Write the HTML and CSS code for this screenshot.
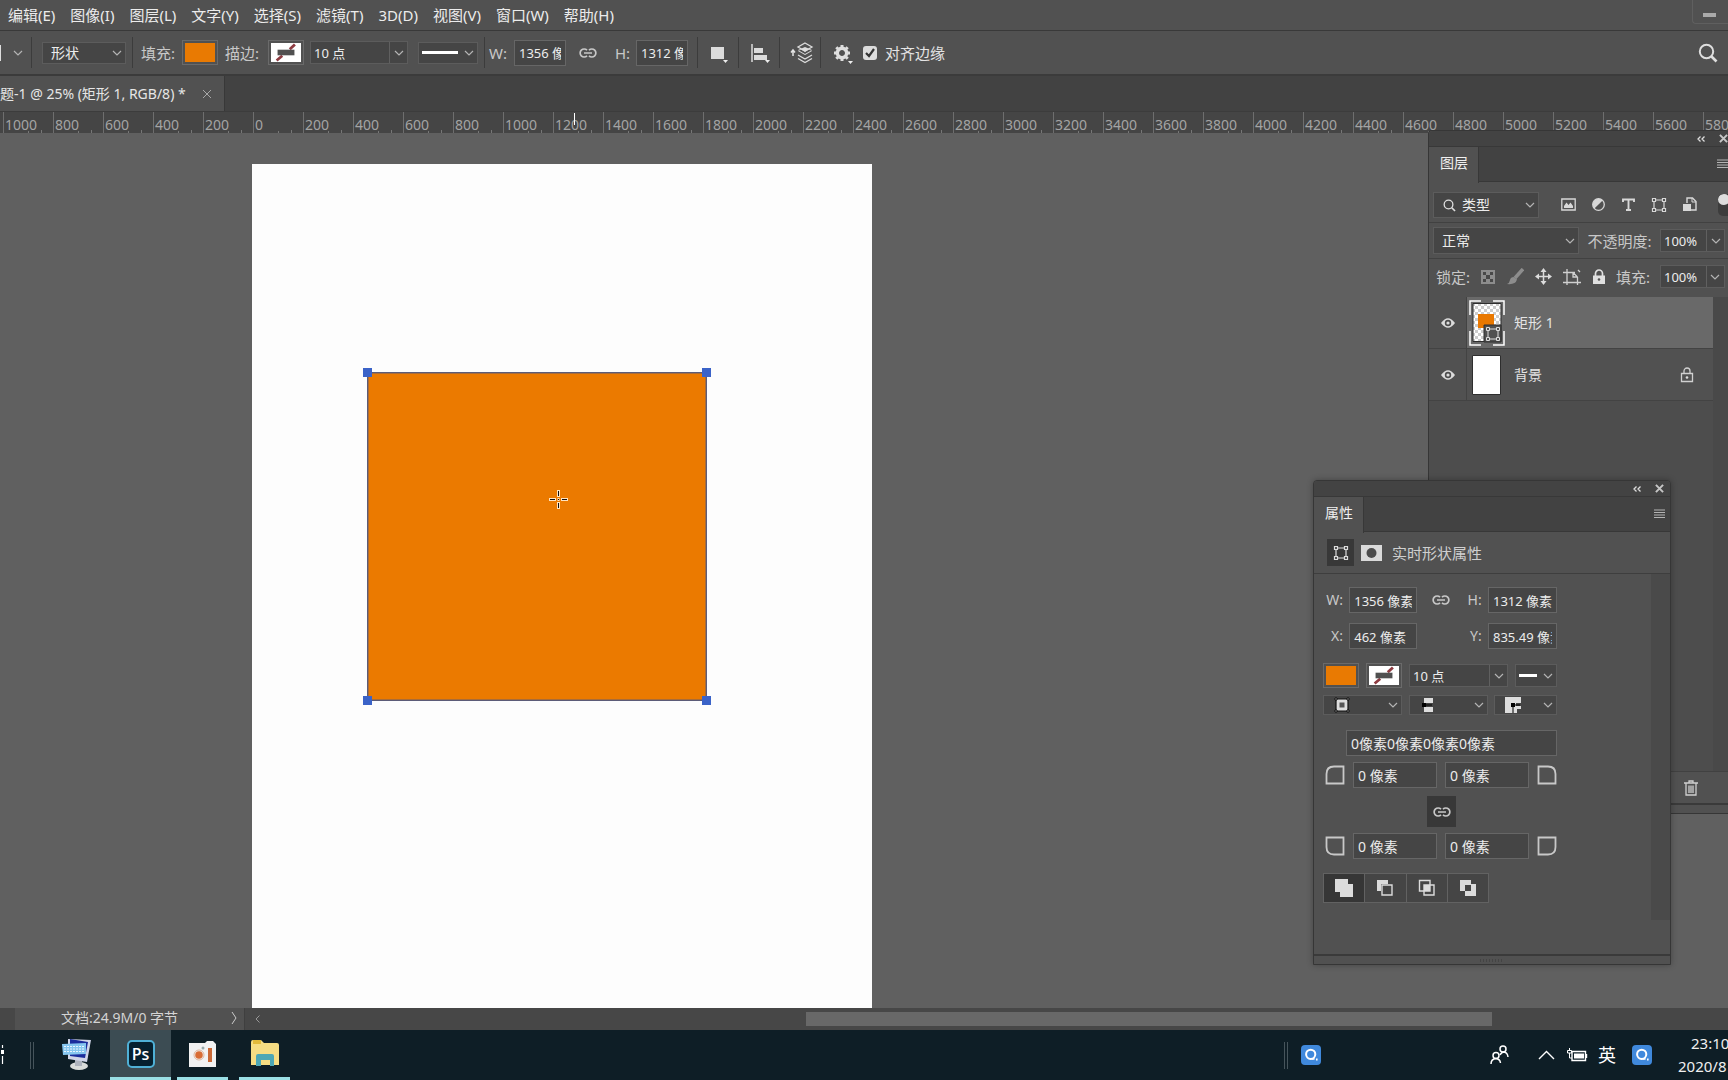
FILE: index.html
```html
<!DOCTYPE html>
<html lang="zh-CN">
<head>
<meta charset="utf-8">
<title>Photoshop</title>
<link rel="stylesheet" href="styles.css">
</head>
<body>
<svg class="defs" aria-hidden="true">
  <symbol id="chev" viewBox="0 0 10 6"><path d="M1 1l4 4 4-4" fill="none" stroke="#b4b4b4" stroke-width="1.2"/></symbol>
  <symbol id="link" viewBox="0 0 20 12"><path d="M9 3.2A4 4 0 1 0 9 8.8M11 3.2a4 4 0 1 1 0 5.6M6 6h8" fill="none" stroke="#c8c8c8" stroke-width="1.7"/></symbol>
  <symbol id="nostroke" viewBox="0 0 32 20"><path fill="#fff" d="M0 0h32v20H0z"/><path d="M6 18.500l6-5M20 6.500l5.500-5" stroke="#8e3b41" stroke-width="3"/><path fill="#505050" d="M7 7h18v6H7z"/></symbol>
  <symbol id="frame" viewBox="0 0 16 16"><path d="M3 3h10v10H3z" fill="none" stroke="currentColor" stroke-width="1.2"/><g fill="#444" stroke="currentColor" stroke-width="1.2"><path d="M1.500 1.500h3v3h-3zM11.500 1.500h3v3h-3zM1.500 11.500h3v3h-3zM11.500 11.500h3v3h-3z"/></g></symbol>
  <symbol id="search" viewBox="0 0 20 20"><circle cx="8.500" cy="8.500" r="6.700" fill="none" stroke="#dedede" stroke-width="2"/><path d="M13.500 13.500l5 5" stroke="#dedede" stroke-width="2.600"/></symbol>
  <symbol id="eye" viewBox="0 0 16 12"><path d="M1 6q7-9.500 14 0q-7 9.500-14 0z" fill="#dcdcdc"/><circle cx="8" cy="6" r="3.200" fill="#4d4d4d"/><circle cx="8" cy="6" r="1.600" fill="#dcdcdc"/></symbol>
  <symbol id="corner" viewBox="0 0 20 20"><path d="M9 1.500h9.500v17h-17V9q0-7.500 7.500-7.500z" fill="none" stroke="#c8c8c8" stroke-width="1.800"/></symbol>
  <symbol id="burger" viewBox="0 0 11 9"><path d="M0 1h11M0 3.500h11M0 6h11M0 8.500h11" stroke="#b4b4b4"/></symbol>
  <symbol id="collapse" viewBox="0 0 8 6"><path d="M3.500.5L1 3l2.500 2.500M7.500.5L5 3l2.500 2.500" fill="none" stroke="#ddd" stroke-width="1.300"/></symbol>
  <symbol id="close" viewBox="0 0 10 10"><path d="M1 1l8 8M9 1L1 9" stroke="#c6c6c6" stroke-width="2.200"/></symbol>
  <symbol id="qicon" viewBox="0 0 20 20"><rect width="20" height="20" rx="4" fill="#4089dc"/><circle cx="9.700" cy="9.300" r="4.600" fill="none" stroke="#fff" stroke-width="2"/><path d="M10.500 13.800h3M15 14.500h1.600" stroke="#fff" stroke-width="1.800"/></symbol>
</svg>

<nav class="menubar">
  <button class="menu">编辑(E)</button><button class="menu">图像(I)</button><button class="menu">图层(L)</button><button class="menu">文字(Y)</button><button class="menu">选择(S)</button><button class="menu">滤镜(T)</button><button class="menu">3D(D)</button><button class="menu">视图(V)</button><button class="menu">窗口(W)</button><button class="menu">帮助(H)</button>
  <button class="minimize" aria-label="最小化"><span class="minimize-bar"></span></button>
</nav>

<div class="options">
  <div class="group group-tool"><span class="tool-edge"></span><button class="bare" aria-label="工具预设"><svg width="10" height="6"><use href="#chev"/></svg></button></div>
  <div class="group group-mode"><select class="select select-mode" aria-label="模式"><option>形状</option></select></div>
  <div class="group group-paint">
    <span class="label label-fill">填充:</span>
    <button class="swatch" aria-label="填充颜色"><span class="swatch-orange"></span></button>
    <span class="label label-stroke">描边:</span>
    <button class="swatch" aria-label="描边颜色"><svg class="swatch-none"><use href="#nostroke"/></svg></button>
    <span class="combo combo-stroke"><input class="combo-input" aria-label="描边宽度" value="10 点"><button class="combo-arrow" aria-label="展开描边宽度"><svg width="10" height="6"><use href="#chev"/></svg></button></span>
    <button class="picker picker-line" aria-label="描边类型"><span class="line-sample"></span><svg width="10" height="6"><use href="#chev"/></svg></button>
  </div>
  <div class="group group-size">
    <label class="label label-w" for="opt-w">W:</label><input class="field field-opt" id="opt-w" value="1356 像素">
    <button class="bare link-btn" aria-label="链接宽高"><svg width="20" height="12"><use href="#link"/></svg></button>
    <label class="label label-h" for="opt-h">H:</label><input class="field field-opt" id="opt-h" value="1312 像素">
  </div>
  <div class="group group-icon"><button class="bare" aria-label="路径操作"><svg width="22" height="22" viewBox="0 0 22 22"><path d="M2 5h13v12H2z" fill="#dcdcdc"/><path d="M14 18h5l-2.500 3z" fill="#eee"/></svg></button></div>
  <div class="group group-icon"><button class="bare" aria-label="路径对齐方式"><svg width="22" height="22" viewBox="0 0 22 22"><path d="M2 2v18" stroke="#dcdcdc" stroke-width="1.500"/><path d="M4 6h9v5H4zM4 13h13v5H4z" fill="#dcdcdc"/><path d="M15 18h5l-2.500 3z" fill="#eee"/></svg></button></div>
  <div class="group group-icon"><button class="bare" aria-label="路径排列方式"><svg width="26" height="22" viewBox="0 0 26 22"><path d="M4 14V8M2 10.500L4 8l2 2.500" stroke="#e4e4e4" fill="none" stroke-width="1.500"/><path d="M16 1l7 4-7 4-7-4z" fill="none" stroke="#dcdcdc" stroke-width="1.300"/><path d="M9 9l7 4 7-4-3-1.500-4 2.500-4-2.500zM9 8l7-3 7 3-7 4z" fill="#dcdcdc"/><path d="M9 13l7 4 7-4M9 16.500l7 4 7-4" fill="none" stroke="#dcdcdc" stroke-width="1.300"/></svg></button></div>
  <div class="group group-last">
    <button class="bare" aria-label="路径选项"><svg width="22" height="22" viewBox="0 0 22 22"><g transform="translate(9 11)"><circle r="4.700" fill="none" stroke="#dedede" stroke-width="3.400"/><path d="M0-8v3M0 5v3M-8 0h3M5 0h3M-5.700-5.700l2 2M3.700 3.700l2 2M-5.700 5.700l2-2M3.700-3.700l2-2" stroke="#dedede" stroke-width="3"/></g><path d="M15 19h5l-2.500 3z" fill="#eee"/></svg></button>
    <label class="check"><input class="check-box" type="checkbox" checked>对齐边缘</label>
  </div>
  <button class="bare search-btn" aria-label="搜索"><svg width="20" height="20"><use href="#search"/></svg></button>
</div>

<div class="tabs"><div class="tab"><span class="tab-title">题-1 @ 25% (矩形 1, RGB/8) *</span><button class="bare" aria-label="关闭文档"><svg width="10" height="10" viewBox="0 0 10 10"><path d="M1 1l8 8M9 1L1 9" stroke="#a8a8a8"/></svg></button></div></div>

<main class="workspace">
  <div class="ruler"><span class="tick">1000</span><span class="tick">800</span><span class="tick">600</span><span class="tick">400</span><span class="tick">200</span><span class="tick">0</span><span class="tick">200</span><span class="tick">400</span><span class="tick">600</span><span class="tick">800</span><span class="tick">1000</span><span class="tick">1200</span><span class="tick">1400</span><span class="tick">1600</span><span class="tick">1800</span><span class="tick">2000</span><span class="tick">2200</span><span class="tick">2400</span><span class="tick">2600</span><span class="tick">2800</span><span class="tick">3000</span><span class="tick">3200</span><span class="tick">3400</span><span class="tick">3600</span><span class="tick">3800</span><span class="tick">4000</span><span class="tick">4200</span><span class="tick">4400</span><span class="tick">4600</span><span class="tick">4800</span><span class="tick">5000</span><span class="tick">5200</span><span class="tick">5400</span><span class="tick">5600</span><span class="tick">5800</span><span class="ruler-mark"></span></div>
  <div class="canvas">
    <div class="document">
      <div class="shape"><i class="handle handle-tl"></i><i class="handle handle-tr"></i><i class="handle handle-bl"></i><i class="handle handle-br"></i>
        <svg class="cursor" width="19" height="19" viewBox="0 0 19 19"><path d="M9.500 0v7M9.500 12v7M0 9.500h7M12 9.500h7M8.500 9.500h2" stroke="#ffe3c0" stroke-width="3"/><path d="M9.500 1v5M9.500 13v5M1 9.500h5M13 9.500h5M9 9.500h1" stroke="#111"/></svg>
      </div>
    </div>
  </div>

  <section class="panel layers">
    <header class="panel-head"><button class="bare" aria-label="折叠图层"><svg width="8" height="6"><use href="#collapse"/></svg></button><button class="bare" aria-label="关闭图层"><svg width="9" height="9"><use href="#close"/></svg></button></header>
    <div class="panel-tabs"><button class="panel-tab">图层</button><button class="bare" aria-label="图层菜单"><svg width="11" height="9"><use href="#burger"/></svg></button></div>
    <div class="layer-row filter-row">
      <span class="filter-wrap"><svg class="filter-icon" width="13" height="13"><use href="#search"/></svg><select class="select select-filter" aria-label="筛选类型"><option>类型</option></select></span>
      <div class="filter-icons">
        <button class="bare" aria-label="像素图层"><svg width="15" height="15" viewBox="0 0 15 15"><path d="M.8 2h13.400v11H.8z" fill="none" stroke="#d8d8d8" stroke-width="1.300"/><path d="M3 11V9l2.500-3.500L7.500 8l2-2.500L12 9v2z" fill="#d8d8d8"/></svg></button>
        <button class="bare" aria-label="调整图层"><svg width="15" height="15" viewBox="0 0 15 15"><circle cx="7.500" cy="7.500" r="5.800" fill="none" stroke="#d8d8d8" stroke-width="1.300"/><path d="M11.600 3.400a5.800 5.800 0 0 0-8.200 8.200z" fill="#d8d8d8"/></svg></button>
        <button class="bare" aria-label="文字图层"><svg width="15" height="15" viewBox="0 0 15 15"><path d="M2 5V2.500h11V5M7.500 2.500v10M5 13h5" fill="none" stroke="#d8d8d8" stroke-width="1.900"/></svg></button>
        <button class="bare frame-light" aria-label="形状图层"><svg width="16" height="16"><use href="#frame"/></svg></button>
        <button class="bare" aria-label="智能对象"><svg width="15" height="15" viewBox="0 0 15 15"><path d="M5 6V1h5.500L14 4.500V13H9" fill="none" stroke="#d8d8d8" stroke-width="1.400"/><path d="M10 1v4h4" fill="none" stroke="#d8d8d8"/><path d="M1 7h8v7H1z" fill="#d8d8d8"/></svg></button>
      </div>
      <button class="toggle" aria-label="打开图层过滤"><span class="toggle-knob"></span></button>
    </div>
    <div class="layer-row blend-row">
      <select class="select select-blend" aria-label="混合模式"><option>正常</option></select>
      <label class="label" for="opacity">不透明度:</label>
      <span class="combo combo-pct"><input class="combo-input" id="opacity" value="100%"><button class="combo-arrow" aria-label="展开不透明度"><svg width="10" height="6"><use href="#chev"/></svg></button></span>
    </div>
    <div class="layer-row lock-row">
      <span class="label">锁定:</span>
      <div class="lock-icons">
        <button class="bare" aria-label="锁定透明像素"><svg width="16" height="16" viewBox="0 0 16 16"><path d="M1 1h14v14H1z" fill="#8d8d8d"/><path d="M3 3h3v3H3zM10 3h3v3h-3zM6 6h4v4H6zM3 10h3v3H3zM10 10h3v3h-3z" fill="#484848"/></svg></button>
        <button class="bare" aria-label="锁定图像像素"><svg width="17" height="17" viewBox="0 0 17 17"><path d="M16 1L8 10" stroke="#8d8d8d" stroke-width="3.500"/><path d="M0 16q2.500-1 3-4T7 9l3 2.500Q8.500 17 0 16z" fill="#8d8d8d"/></svg></button>
        <button class="bare" aria-label="锁定位置"><svg width="17" height="17" viewBox="0 0 17 17"><path d="M8.500 2v13M2 8.500h13" stroke="#dcdcdc" stroke-width="1.500"/><path d="M8.500 0l3 4h-6zM8.500 17l3-4h-6zM0 8.500l4-3v6zM17 8.500l-4-3v6z" fill="#dcdcdc"/></svg></button>
        <button class="bare" aria-label="锁定画板"><svg width="18" height="16" viewBox="0 0 18 16"><path d="M4 0v16M0 3.500h12M0 13.500h18M14.500 8v8M10 3.500l4.500 4.500M10 3.500V8h4.500M15 1l2 2" fill="none" stroke="#d0d0d0" stroke-width="1.300"/></svg></button>
        <button class="bare" aria-label="全部锁定"><svg width="14" height="16" viewBox="0 0 14 16"><path d="M3.500 8V4.500a3.500 3.500 0 0 1 7 0V8" fill="none" stroke="#e0e0e0" stroke-width="1.700"/><path d="M1 6.500h12V15H1z" fill="#e0e0e0"/><circle cx="7" cy="10.500" r="1.300" fill="#555"/></svg></button>
      </div>
      <label class="label" for="fillpct">填充:</label>
      <span class="combo combo-pct"><input class="combo-input" id="fillpct" value="100%"><button class="combo-arrow" aria-label="展开填充"><svg width="10" height="6"><use href="#chev"/></svg></button></span>
    </div>
    <div class="layer-list">
      <div class="layer-items">
        <div class="layer"><button class="eye" aria-label="显示矩形 1"><svg width="16" height="12"><use href="#eye"/></svg></button>
          <div class="layer-main layer-selected">
            <svg class="thumb" width="36" height="46" viewBox="0 0 36 46"><defs><pattern id="chk" width="6" height="6" patternUnits="userSpaceOnUse"><path fill="#fff" d="M0 0h6v6H0z"/><path fill="#ccc" d="M0 0h3v3H0zM3 3h3v3H3z"/></pattern></defs><path d="M4 3.500h28v38H4z" fill="url(#chk)" stroke="#2e2e2e"/><path d="M9 14h16v14H9z" fill="#e97800"/><path d="M15 25h17v17H15z" fill="#505050" stroke="#2e2e2e"/><path d="M19 29h10v10H19z" fill="none" stroke="#ddd"/><path d="M17.500 27.500h3v3h-3zM27.500 27.500h3v3h-3zM17.500 37.500h3v3h-3zM27.500 37.500h3v3h-3z" fill="#555" stroke="#ddd"/><path d="M12 1H1v14M24 1h11v14M12 45H1V31M24 45h11V31" fill="none" stroke="#fff" stroke-width="1.500"/></svg>
            <span class="layer-name">矩形 1</span></div></div>
        <div class="layer"><button class="eye" aria-label="显示背景"><svg width="16" height="12"><use href="#eye"/></svg></button>
          <div class="layer-main">
            <svg class="thumb" width="36" height="46" viewBox="0 0 36 46"><path d="M3.500 3.500h28v39h-28z" fill="#fff" stroke="#2e2e2e"/></svg>
            <span class="layer-name">背景</span>
            <svg class="layer-lock" width="14" height="16" viewBox="0 0 14 16"><path d="M4 7V4a3 3 0 0 1 6 0v3M1.500 6.500h11v8h-11z" fill="none" stroke="#d0d0d0" stroke-width="1.300"/><circle cx="7" cy="10.500" r="1.300" fill="#ddd"/></svg></div></div>
      </div>
    </div>
    <footer class="layer-foot"><button class="bare" aria-label="删除图层"><svg width="14" height="16" viewBox="0 0 14 16"><path d="M0 3h14M5 3V1h4v2M2 3v12h10V3M5 5.500v7.500M7 5.500v7.500M9 5.500v7.500" fill="none" stroke="#cfcfcf" stroke-width="1.300"/></svg></button></footer>
    <div class="panel-grip"></div>
  </section>

  <section class="panel props">
    <header class="panel-head"><button class="bare" aria-label="折叠属性"><svg width="8" height="6"><use href="#collapse"/></svg></button><button class="bare" aria-label="关闭属性"><svg width="9" height="9"><use href="#close"/></svg></button></header>
    <div class="panel-tabs"><button class="panel-tab">属性</button><button class="bare" aria-label="属性菜单"><svg width="11" height="9"><use href="#burger"/></svg></button></div>
    <div class="props-title"><button class="kind kind-on" aria-label="形状"><svg width="16" height="16"><use href="#frame"/></svg></button><button class="kind" aria-label="蒙版"><svg width="21" height="16" viewBox="0 0 21 16"><path d="M0 0h21v16H0z" fill="#dadada"/><circle cx="10.500" cy="8" r="5" fill="#4c4c4c"/></svg></button><h2 class="props-heading">实时形状属性</h2></div>
    <div class="props-body">
      <div class="props-form">
        <div class="geometry">
          <label class="label geo-label" for="pw">W:</label><input class="field" id="pw" value="1356 像素"><button class="bare" aria-label="链接宽高"><svg width="20" height="12"><use href="#link"/></svg></button><label class="label geo-label" for="ph">H:</label><input class="field" id="ph" value="1312 像素">
          <label class="label geo-label" for="px">X:</label><input class="field" id="px" value="462 像素"><span></span><label class="label geo-label" for="py">Y:</label><input class="field" id="py" value="835.49 像素">
        </div>
        <div class="paint-row">
          <button class="swatch" aria-label="填充"><span class="swatch-orange"></span></button><button class="swatch" aria-label="描边"><svg class="swatch-none"><use href="#nostroke"/></svg></button>
          <span class="combo combo-props"><input class="combo-input" aria-label="描边粗细" value="10 点"><button class="combo-arrow" aria-label="展开描边粗细"><svg width="10" height="6"><use href="#chev"/></svg></button></span>
          <button class="picker picker-props" aria-label="线型"><span class="line-sample"></span><svg width="10" height="6"><use href="#chev"/></svg></button>
        </div>
        <div class="edge-row">
          <button class="picker" aria-label="描边对齐"><svg width="16" height="16" viewBox="0 0 16 16"><path d="M2 2h12v12H2z" fill="#ddd" stroke="#111" stroke-width="1.200"/><path d="M5.500 5.500h5v5h-5z" fill="#555"/><path d="M1 1h2v2H1zM13 1h2v2h-2zM1 13h2v2H1zM13 13h2v2h-2z" fill="#ddd" stroke="#111"/></svg><svg width="10" height="6"><use href="#chev"/></svg></button>
          <button class="picker" aria-label="线段端点"><svg width="16" height="16" viewBox="0 0 16 16"><path d="M4 1h9v5H6v4h7v5H4z" fill="#ddd"/><path d="M2 6h4v4H2zM6 7.500h6v1H6z" fill="#000"/></svg><svg width="10" height="6"><use href="#chev"/></svg></button>
          <button class="picker" aria-label="线条合并"><svg width="16" height="16" viewBox="0 0 16 16"><path d="M0 0h16v6h-5v3h5v3h-4v4H0z" fill="#ddd"/><path d="M6 6h4v4H6z"/><path d="M8 8v8M8 8h7" fill="none" stroke="#000"/></svg><svg width="10" height="6"><use href="#chev"/></svg></button>
        </div>
        <input class="field radius radius-all" aria-label="圆角半径" value="0像素0像素0像素0像素">
        <div class="radius-row"><svg width="20" height="20"><use href="#corner"/></svg><input class="field radius" aria-label="左上角半径" value="0 像素"><input class="field radius" aria-label="右上角半径" value="0 像素"><svg class="corner-tr" width="20" height="20"><use href="#corner"/></svg></div>
        <button class="radius-link" aria-label="链接半径"><svg width="20" height="12"><use href="#link"/></svg></button>
        <div class="radius-row"><svg class="corner-bl" width="20" height="20"><use href="#corner"/></svg><input class="field radius" aria-label="左下角半径" value="0 像素"><input class="field radius" aria-label="右下角半径" value="0 像素"><svg class="corner-br" width="20" height="20"><use href="#corner"/></svg></div>
        <div class="path-ops">
          <button class="op op-on" aria-label="合并形状"><svg width="18" height="18" viewBox="0 0 18 18"><path d="M0 0h13v5h5v13H5v-5H0z" fill="#dcdcdc"/></svg></button>
          <button class="op" aria-label="减去顶层形状"><svg width="18" height="18" viewBox="0 0 18 18"><path d="M1 1h11v4H5v7H1z" fill="#dcdcdc"/><path d="M6 6h10v10H6z" fill="none" stroke="#dcdcdc" stroke-width="1.400"/></svg></button>
          <button class="op" aria-label="与形状区域相交"><svg width="18" height="18" viewBox="0 0 18 18"><path d="M1.500 1.500h10.500v10.500H1.500zM6 6h10v10H6z" fill="none" stroke="#dcdcdc" stroke-width="1.400"/><path d="M6 6h6v6H6z" fill="#dcdcdc"/></svg></button>
          <button class="op" aria-label="排除重叠形状"><svg width="18" height="18" viewBox="0 0 18 18"><path d="M1 1h11v4h5v12H6v-5H1zM6 6v6h6V6z" fill="#dcdcdc" fill-rule="evenodd"/></svg></button>
        </div>
      </div>
      <div class="props-scroll"></div>
    </div>
    <div class="panel-grip"><span class="grip-dots"></span></div>
  </section>
</main>

<div class="status">
  <div class="status-info"><span class="status-text">文档:24.9M/0 字节</span><button class="bare" aria-label="状态选项"><svg width="6" height="14" viewBox="0 0 6 14"><path d="M1 1l4 6-4 6" fill="none" stroke="#ccc"/></svg></button></div>
  <div class="hscroll"><button class="bare" aria-label="向左滚动"><svg width="5" height="8" viewBox="0 0 5 8"><path d="M4.500.5L1 4l3.500 3.500" fill="none" stroke="#999"/></svg></button><span class="hscroll-track"><span class="hscroll-thumb"></span></span></div>
</div>

<footer class="taskbar">
  <svg class="task-edge" width="5" height="22" viewBox="0 0 5 22"><path d="M2.500 1v3M2.500 12v8" stroke="#fff" stroke-width="1.200"/><path d="M1 6h3v4H1z" fill="#fff"/></svg>
  <span class="task-divider"></span>
  <button class="task task-plain" aria-label="屏幕键盘"><svg width="30" height="32" viewBox="0 0 30 32"><ellipse cx="17" cy="28" rx="9" ry="4" fill="#d9dcda"/><path d="M13 20l7 1v7h-7z" fill="#aeb3bd"/><path d="M6 1l23 1-4 22-19-3z" fill="#d0d5e8"/><path d="M8 1l18 3-3 16-15-2z" fill="#1b2d9c"/><path d="M0 6l24-1v11L1 17z" fill="#86c6ef"/><path d="M2 8.500h20M2 11h20M2 13.500h20" stroke="#e9f6ff" stroke-dasharray="2 1"/></svg></button>
  <button class="task task-active"><span class="ps">Ps</span></button>
  <button class="task task-open" aria-label="录屏"><svg width="27" height="27" viewBox="0 0 27 27"><path d="M0 3h16l2-2h6l3 3v23H0z" fill="#f2f2f2"/><circle cx="10" cy="15" r="5" fill="none" stroke="#ddb69d"/><circle cx="10" cy="15" r="3.800" fill="#d96d35"/><circle cx="14" cy="8" r="1.500" fill="#9aa"/><path d="M19 8h4v14h-4z" fill="#ca6937"/></svg></button>
  <button class="task task-open" aria-label="文件资源管理器"><svg width="28" height="27" viewBox="0 0 28 27"><path d="M0 2q0-2 2-2h8l3 3h13q2 0 2 2v20H0z" fill="#f6dd83"/><path d="M2 0h8v4H2z" fill="#e2ba3b"/><path d="M5 26V16q0-2 2-2h14q2 0 2 2v10h-4v-6h-9v6z" fill="#4da7b5"/></svg></button>
  <div class="tray">
    <span class="task-divider"></span>
    <button class="bare tray-q" aria-label="搜索栏"><svg width="20" height="20"><use href="#qicon"/></svg></button>
    <button class="bare tray-people" aria-label="人脉"><svg width="19" height="20" viewBox="0 0 19 20"><g fill="none" stroke="#fff" stroke-width="1.500"><circle cx="6" cy="10.500" r="3"/><circle cx="13" cy="4" r="3"/><path d="M1 19q0-5 5-5.500 4 .5 4.500 4.500M10 10q1.500-3 4-3 3.500.5 4 5"/></g></svg></button>
    <button class="bare tray-caret" aria-label="显示隐藏的图标"><svg width="17" height="10" viewBox="0 0 17 10"><path d="M1 9l7.500-7.500L16 9" fill="none" stroke="#fff" stroke-width="1.400"/></svg></button>
    <button class="bare tray-battery" aria-label="电池"><svg width="21" height="14" viewBox="0 0 21 14"><path d="M5 3.500h13.500v9H5zM19.500 6v4" fill="none" stroke="#fff" stroke-width="1.400"/><path d="M7 5.500h10v5H7z" fill="#fff"/><path d="M2.500 0v3M.5 2.500h4V5h-4zM2.500 5v5H5" fill="none" stroke="#fff"/></svg></button>
    <button class="bare tray-ime">英</button>
    <button class="bare" aria-label="输入法"><svg width="20" height="20"><use href="#qicon"/></svg></button>
    <div class="clock"><time>23:10</time><time>2020/8</time></div>
  </div>
</footer>
</body>
</html>
```
FILE: styles.css
```css
* { box-sizing: border-box; }

body {
  margin: 0;
  height: 100vh;
  display: flex;
  flex-direction: column;
  overflow: hidden;
  background: #606060;
  color: #dcdcdc;
  font: 15px/20px "Noto Sans", "Noto Sans CJK SC", sans-serif;
}

button, input, select { font: inherit; color: inherit; margin: 0; border-radius: 0; }
button { padding: 0; border: 0; background: none; }
svg { display: block; flex: none; }
.defs { position: absolute; width: 0; height: 0; }
.bare { flex: none; }
.label { white-space: nowrap; color: #c8c8c8; }

/* Menu bar */
.menubar { display: flex; align-items: center; gap: 15px; height: 31px; padding-left: 8px; background: #515151; border-bottom: 1px solid #393939; flex: none; }
.menu { font-size: 15px; white-space: nowrap; color: #ececec; }
.minimize { align-self: flex-start; width: 36px; height: 24px; margin-left: auto; padding-left: 10px; border: 1px solid #5f5f5f; border-width: 0 0 1px 1px; border-radius: 0 0 0 4px; }
.minimize-bar { display: block; width: 13px; height: 4px; margin-top: 6px; background: #aaa; }

/* Tool options */
.options { display: flex; align-items: center; height: 45px; background: #515151; border-bottom: 2px solid #3b3b3b; flex: none; }
.group { display: flex; align-items: center; height: 31px; border-right: 1px solid #3c3c3c; flex: none; }
.group-tool { width: 32px; gap: 12px; }
.tool-edge { width: 1px; height: 16px; background: #ddd; }
.group-mode { width: 101px; padding-left: 10px; }
.group-paint { width: 352px; padding-left: 8px; }
.group-size { width: 213px; padding-left: 4px; }
.group-icon { width: 41px; padding-left: 4px; justify-content: center; }
.group-last { padding-left: 12px; gap: 8px; border: 0; }
.label-fill { width: 41px; }
.label-stroke { width: 50px; padding-left: 7px; }
.label-w { width: 25px; }
.label-h { width: 21px; }
.link-btn { margin: 0 17px 0 12px; }
.combo-stroke { width: 98px; margin: 0 10px 0 6px; }
.picker-line { width: 60px; height: 22px; }
.picker-line .line-sample { width: 36px; }
.search-btn { margin: 0 10px 0 auto; }

.select {
  appearance: none;
  height: 22px;
  padding: 0 8px;
  border: 1px solid #5c5c5c;
  outline: 0;
  font-size: 14px;
  line-height: 20px;
  color: #ececec;
  background: #454545 url("data:image/svg+xml,%3Csvg xmlns='http://www.w3.org/2000/svg' width='10' height='6'%3E%3Cpath d='M1 1l4 4 4-4' fill='none' stroke='%23b4b4b4' stroke-width='1.2'/%3E%3C/svg%3E") no-repeat right 3px center;
}
.select-mode { width: 84px; }

.swatch { width: 36px; height: 25px; padding: 2px; border: 1px solid #6a6a6a; flex: none; }
.swatch-orange { display: block; height: 100%; background: #e97a02; }
.swatch-none { width: 100%; height: 100%; background: #fff; }

.combo { display: flex; height: 23px; border: 1px solid #5c5c5c; background: #454545; flex: none; }
.combo-input { flex: 1; min-width: 0; padding: 0 3px; border: 0; background: none; font-size: 13px; color: #ececec; }
.combo-arrow { display: grid; place-items: center; width: 18px; border-left: 1px solid #606060; }

.picker { display: flex; align-items: center; justify-content: space-between; padding: 0 3px; border: 1px solid #5c5c5c; background: #454545; }
.line-sample { height: 3px; background: #fff; }

.field { width: 100%; min-width: 0; height: 26px; padding: 0 4px; border: 1px solid #666; background: #454545; font-size: 13px; color: #ececec; }
.field-opt { width: 52px; }
.radius { font-size: 14px; }

.check { display: flex; align-items: center; gap: 8px; color: #e4e4e4; }
.check-box {
  appearance: none;
  width: 14px;
  height: 14px;
  margin: 0;
  border-radius: 3px;
  background: #dcdcdc url("data:image/svg+xml,%3Csvg xmlns='http://www.w3.org/2000/svg' width='14' height='14'%3E%3Cpath d='M3 7l3 3 5-7' fill='none' stroke='%23333' stroke-width='2.2'/%3E%3C/svg%3E");
}

/* Document tabs */
.tabs { display: flex; height: 35px; background: #424242; flex: none; }
.tab { display: flex; align-items: center; gap: 16px; padding-right: 12px; background: #515151; border-right: 1px solid #383838; }
.tab-title { font-size: 14px; white-space: nowrap; color: #e6e6e6; }

/* Workspace */
.workspace { position: relative; flex: 1; min-height: 0; display: flex; flex-direction: column; overflow: hidden; }
.ruler { position: relative; display: flex; height: 22px; padding-left: 3px; background: #454545; border-top: 1px solid #3c3c3c; overflow: hidden; flex: none; }
.tick {
  flex: none;
  width: 50px;
  padding: 3px 0 0 1px;
  border-left: 1px solid #6e6e6e;
  font-size: 14px;
  line-height: 20px;
  color: #a4a4a4;
  background: linear-gradient(#777, #777) 24px 100% / 1px 2px no-repeat, linear-gradient(#777, #777) 37px 100% / 1px 3px no-repeat;
}
.ruler-mark { position: absolute; left: 574px; top: 1px; width: 1px; height: 12px; background: #fff; }
.canvas { position: relative; flex: 1; background: #606060; }
.document { position: absolute; left: 252px; top: 31px; bottom: 0; width: 620px; background: #fdfdfd; }
.shape { position: absolute; left: 115px; top: 208px; width: 340px; height: 329px; background: #eb7a00; border: 1px solid #5c5c78; box-shadow: inset 0 0 0 1px rgba(92, 92, 120, .45); }
.handle { position: absolute; width: 9px; height: 9px; background: #3b63c8; }
.handle-tl { left: -5px; top: -5px; }
.handle-tr { right: -5px; top: -5px; }
.handle-bl { left: -5px; bottom: -5px; }
.handle-br { right: -5px; bottom: -5px; }
.cursor { position: absolute; left: 181px; top: 117px; }

/* Floating panels */
.panel { position: absolute; display: flex; flex-direction: column; background: #515151; border: 1px solid #363636; border-radius: 4px 4px 0 0; }
.panel-head { display: flex; align-items: center; justify-content: flex-end; gap: 14px; height: 15px; background: #434343; border-radius: 4px 4px 0 0; flex: none; }
.panel-tabs { display: flex; align-items: center; justify-content: space-between; height: 36px; padding-bottom: 2px; background: #424242; border: 1px solid #383838; border-width: 1px 0; flex: none; }
.panel-tab { height: 36px; padding: 0 10px 4px 11px; background: #515151; border-right: 1px solid #383838; font-size: 14px; color: #f0f0f0; align-self: flex-start; }
.panel-grip { height: 10px; border-top: 2px solid #3a3a3a; flex: none; }

.layers { top: 19px; right: 0; width: 300px; height: 684px; border-right: 0; }
.layer-row { display: flex; align-items: center; height: 36px; padding: 0 3px 0 4px; border-bottom: 1px solid #414141; flex: none; }
.filter-row { height: 41px; padding-top: 5px; padding-right: 0; }
.filter-wrap { position: relative; }
.filter-icon { position: absolute; left: 10px; top: 7px; }
.select-filter { display: block; width: 106px; height: 26px; padding-left: 28px; }
.filter-icons { display: flex; gap: 15px; margin-left: 22px; }
.frame-light { color: #d8d8d8; }
.toggle { width: 10px; height: 22px; margin-left: auto; background: #3d3d3d; border-radius: 5px 0 0 5px; overflow: hidden; }
.toggle-knob { display: block; width: 12px; height: 11px; margin-bottom: 11px; border-radius: 50%; background: #ddd; }
.blend-row, .lock-row { justify-content: space-between; }
.select-blend { width: 146px; height: 27px; }
.combo-pct { width: 65px; }
.lock-row { height: 38px; padding: 0 3px 3px 7px; border: 0; }
.lock-icons { display: flex; align-items: center; gap: 11px; }

.layer-list { flex: 1; display: flex; background: #4d4d4d; border-right: 15px solid #494949; }
.layer-items { flex: 1; }
.layer { display: flex; height: 52px; background: #515151; border-bottom: 1px solid #434343; }
.eye { display: grid; place-items: center; width: 38px; border-right: 1px solid #434343; }
.layer-main { flex: 1; display: flex; align-items: center; gap: 9px; padding: 0 19px 0 2px; }
.layer-selected { background: #696969; }
.layer-name { color: #e4e4e4; font-size: 14px; }
.layer-lock { margin-left: auto; }
.layer-foot { display: flex; align-items: center; justify-content: flex-end; height: 32px; padding-right: 30px; border-top: 1px solid #414141; flex: none; }

.props { top: 369px; right: 57px; width: 358px; height: 485px; box-shadow: 0 0 6px rgba(0, 0, 0, .3); }
.props .panel-head { padding-right: 6px; }
.props .panel-tabs { padding-right: 5px; }
.props-title { display: flex; align-items: center; gap: 7px; height: 42px; padding-left: 13px; border-bottom: 1px solid #3e3e3e; flex: none; }
.kind { display: grid; place-items: center; height: 27px; color: #dcdcdc; }
.kind-on { width: 27px; background: #383838; }
.props-heading { margin: 0 0 0 3px; font-size: 15px; font-weight: 400; color: #cfcfcf; }
.props-body { flex: 1; display: flex; justify-content: space-between; }
.props-form { display: flex; flex-direction: column; width: 243px; padding: 13px 0 0 9px; }
.props-scroll { width: 19px; margin-bottom: 34px; background: #4a4a4a; }
.geometry { display: grid; grid-template-columns: 20px 68px 27px 25px 69px; justify-content: space-between; row-gap: 10px; align-items: center; margin-bottom: 14px; }
.geometry .bare { justify-self: end; }
.geo-label { text-align: right; font-size: 14px; }
.paint-row, .edge-row { display: flex; justify-content: space-between; }
.paint-row { align-items: center; margin-bottom: 7px; }
.combo-props { width: 99px; }
.picker-props { width: 42px; height: 23px; }
.picker-props .line-sample { width: 18px; }
.edge-row { margin-bottom: 15px; }
.edge-row .picker { width: 79px; height: 20px; padding: 0 3px 0 10px; }
.edge-row .picker:last-child { width: 63px; }
.radius-all { width: 211px; align-self: flex-end; margin-bottom: 6px; }
.radius-row { display: grid; grid-template-columns: 20px 84px 84px 20px; justify-content: space-between; align-items: center; padding-left: 2px; }
.corner-tr { transform: scaleX(-1); }
.corner-bl { transform: scaleY(-1); }
.corner-br { transform: scale(-1); }
.radius-link { display: grid; place-items: center; width: 29px; height: 31px; margin: 8px 0 6px 104px; background: #383838; }
.path-ops { display: flex; width: 166px; height: 30px; margin-top: 14px; border: 1px solid #626262; }
.op { flex: 1; display: grid; place-items: center; background: #454545; border-left: 1px solid #626262; }
.op-on { background: #363636; border-left: 0; }
.props .panel-grip { display: flex; align-items: center; justify-content: center; }
.grip-dots { width: 24px; height: 3px; background: repeating-linear-gradient(90deg, #444 0 1px, #515151 1px 3px); }

/* Status strip */
.status { display: flex; height: 22px; padding-left: 15px; background: #474747; flex: none; }
.status-info { display: flex; align-items: center; justify-content: space-between; width: 230px; padding: 0 7px 2px 46px; background: #515151; border-right: 1px solid #3f3f3f; }
.status-text { font-size: 14px; color: #d4d4d4; white-space: nowrap; }
.hscroll { flex: 1; display: flex; align-items: center; gap: 4px; padding-left: 10px; }
.hscroll-track { flex: 1; display: grid; grid-template-columns: 370fr 469fr 161fr; }
.hscroll-thumb { grid-column: 2; height: 14px; background: #686868; }

/* Taskbar */
.taskbar { display: flex; align-items: center; height: 50px; background: #0e1e26; overflow: hidden; flex: none; }
.task-edge { margin-right: 25px; }
.task-divider { width: 4px; height: 27px; border: 1px solid #46545b; border-width: 0 1px; flex: none; }
.task { display: grid; place-items: center; align-self: stretch; width: 51px; margin-right: 11px; border-bottom: 3px solid transparent; }
.task-plain { width: 50px; margin: 0 8px 0 18px; }
.task-active { width: 61px; margin-right: 6px; background: #3c4c53; border-color: #9adfe5; }
.task-open { border-color: #9adfe5; }
.ps { width: 28px; height: 28px; border: 2px solid #4fb0d6; border-radius: 5px; background: #06202f; color: #fff; font: 600 16px/24px "Open Sans", sans-serif; text-align: center; }
.tray { display: flex; align-items: center; margin-left: auto; }
.tray-q { margin: 0 169px 0 13px; }
.tray-people { margin-right: 29px; }
.tray-caret { margin-right: 12px; }
.tray-battery { margin-right: 10px; }
.tray-ime { margin-right: 16px; font-size: 18px; color: #fff; }
.clock { width: 76px; padding-left: 26px; font-size: 15px; line-height: 23px; color: #f0f0f0; white-space: nowrap; }
.clock time { display: block; }
.clock time:first-child { padding-left: 13px; }
```
